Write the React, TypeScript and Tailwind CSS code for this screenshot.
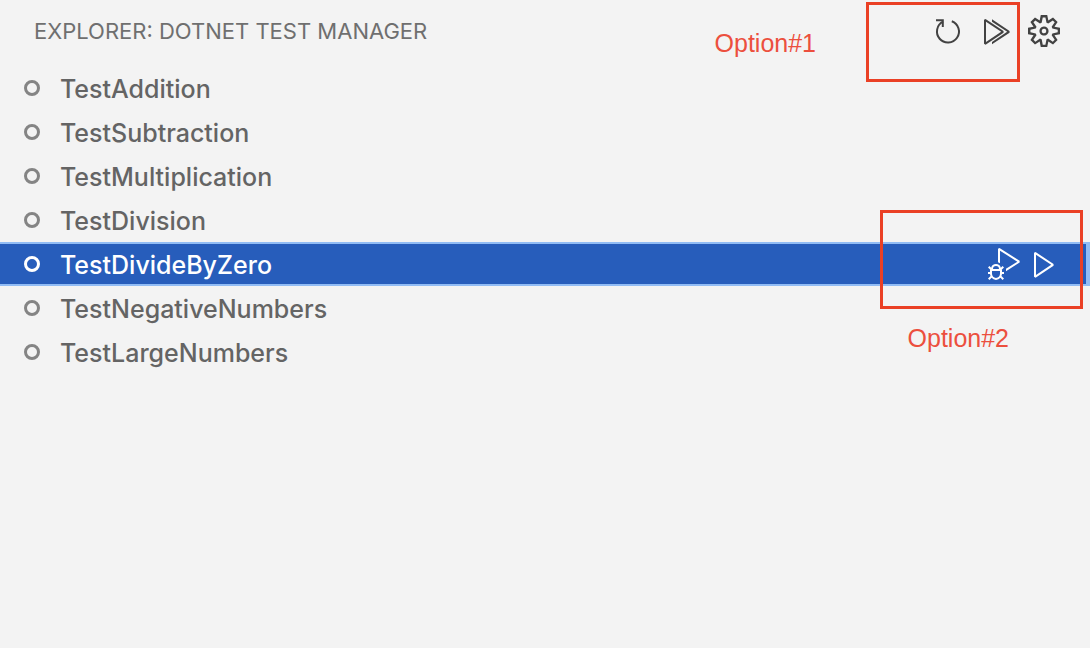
import { useState } from "react";
import { VscDebugAlt, VscPlay, VscRunAll, VscSettingsGear } from "react-icons/vsc";

const tests = [
  "TestAddition",
  "TestSubtraction",
  "TestMultiplication",
  "TestDivision",
  "TestDivideByZero",
  "TestNegativeNumbers",
  "TestLargeNumbers",
];

function RefreshIcon() {
  return (
    <svg viewBox="0 0 32 32" className="size-8" fill="none" stroke="currentColor" strokeWidth="2" aria-hidden="true">
      <path d="M19.8 6.2A11 11 0 1 1 11 6.7" />
      <path d="M4 5.2h6.8V12" />
    </svg>
  );
}

function TestRow({ name, selected, onSelect }: { name: string; selected: boolean; onSelect: () => void }) {
  return (
    <li
      className={
        selected
          ? "flex h-11 items-center border-y-2 border-r-4 border-[#91bcf5] bg-[#275dbb] pr-[26px] text-white"
          : "flex h-11 items-center pr-[30px] text-[#646464]"
      }
    >
      <button type="button" onClick={onSelect} className="flex flex-1 items-center gap-5 pl-6 text-left">
        <span
          className={
            selected
              ? "size-4 rounded-full border-3 border-white"
              : "size-4 rounded-full border-3 border-[#848484]"
          }
        />
        <span className="pt-[2px] text-[25px] leading-[38px] font-medium">{name}</span>
      </button>
      {selected && (
        <div className="flex items-center gap-2">
          <button type="button" aria-label="Debug test">
            <VscDebugAlt className="size-8" />
          </button>
          <button type="button" aria-label="Run test">
            <VscPlay className="size-8" />
          </button>
        </div>
      )}
    </li>
  );
}

export default function App() {
  const [selected, setSelected] = useState("TestDivideByZero");
  return (
    <main className="relative min-h-screen overflow-hidden bg-[#f3f3f3] font-['Inter',sans-serif]">
      <header className="flex h-[66px] items-start justify-between pt-[15px] pr-[30px] pl-[34px]">
        <h1 className="text-[22px] leading-8 text-[#6f6f6f]">EXPLORER: DOTNET TEST MANAGER</h1>
        <div className="flex items-center gap-4 text-[#424242]">
          <button type="button" aria-label="Refresh">
            <RefreshIcon />
          </button>
          <button type="button" aria-label="Run all tests">
            <VscRunAll className="size-8" />
          </button>
          <button type="button" aria-label="Settings">
            <VscSettingsGear className="size-8" />
          </button>
        </div>
      </header>
      <ul>
        {tests.map((name) => (
          <TestRow key={name} name={name} selected={name === selected} onSelect={() => setSelected(name)} />
        ))}
      </ul>
      <div className="pointer-events-none absolute top-[2px] right-[70px] h-20 w-[154px] border-3 border-[#ea4025]" />
      <p className="absolute top-[27px] right-[274px] font-['Liberation_Sans',sans-serif] text-[25px] leading-8 text-[#ec4f3e]">
        Option#1
      </p>
      <div className="pointer-events-none absolute top-[210px] right-[7px] h-[99px] w-[203px] border-3 border-[#ea4025]" />
      <p className="absolute top-[322px] right-[81px] font-['Liberation_Sans',sans-serif] text-[25px] leading-8 text-[#ec4f3e]">
        Option#2
      </p>
    </main>
  );
}
